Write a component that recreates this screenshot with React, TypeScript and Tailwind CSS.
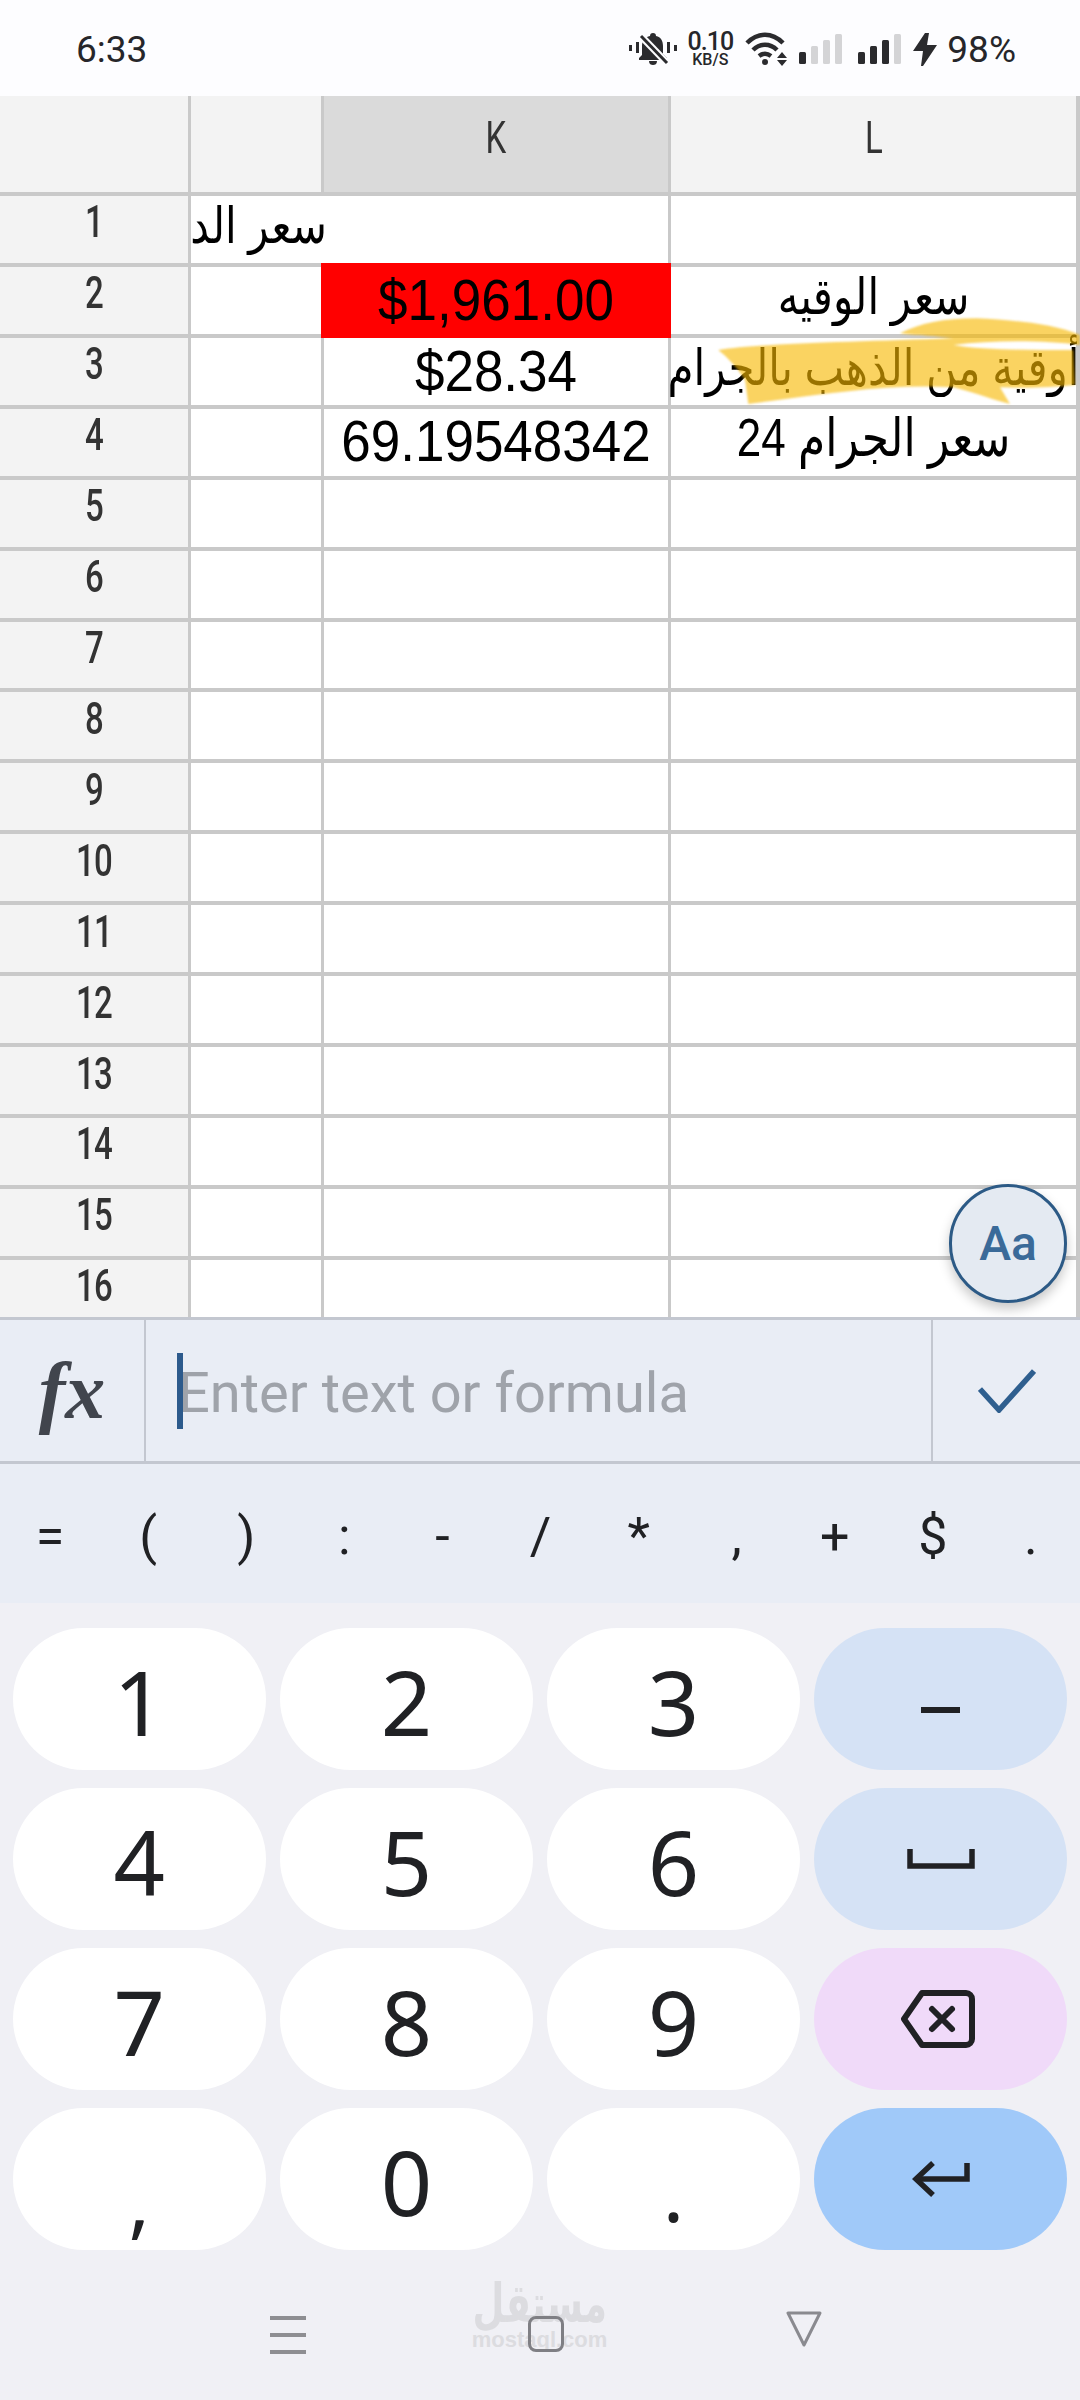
const rowNums = [1, 2, 3, 4, 5, 6, 7, 8, 9, 10, 11, 12, 13, 14, 15, 16];
const symbols = ["=", "(", ")", ":", "-", "/", "*", ",", "+", "$", "."];
const digits = ["1", "2", "3", "4", "5", "6", "7", "8", "9"];

const cells: Record<number, { k?: string; l?: string }> = {
  2: { k: "$1,961.00", l: "سعر الوقيه" },
  3: { k: "$28.34", l: "أوقية من الذهب بالجرام" },
  4: { k: "69.19548342", l: "سعر الجرام 24" },
};

const sans = "font-['Liberation_Sans','DejaVu_Sans',sans-serif]";

function Signal({ bars }: { bars: number }) {
  return (
    <svg width="43" height="30" viewBox="0 0 43 30">
      {[0, 1, 2, 3].map((i) => (
        <rect
          key={i}
          x={i * 12}
          y={18 - i * 6}
          width="7"
          height={12 + i * 6}
          rx="1.5"
          fill={i < bars ? "#2b2b2e" : "#d4d4d6"}
        />
      ))}
    </svg>
  );
}

function StatusBar() {
  return (
    <div className="h-[96px] bg-[#fdfdff] flex items-center pl-[76px] pr-[64px] pt-[2px] justify-between font-['Roboto',sans-serif] text-[#26262a]">
      <span className="text-[37px] leading-none">6:33</span>
      <div className="flex items-center">
        <svg width="48" height="34" viewBox="0 0 48 34" fill="#2b2b2e">
          <rect x="0" y="13" width="3" height="6" />
          <rect x="45" y="13" width="3" height="6" />
          <rect x="7" y="10" width="3" height="11" />
          <rect x="38" y="10" width="3" height="11" />
          <path d="M24 1c2 0 3 1 3 3 5 1 7 5 7 10v8l4 4v2H10v-2l3-3v-9c0-5 3-9 8-10 0-2 1-3 3-3zM20 29h8c0 3-2 4-4 4s-4-1-4-4z" />
          <path d="M11 3l27 28" stroke="#fdfdff" strokeWidth="7" />
          <path d="M12 4l26 27" stroke="#2b2b2e" strokeWidth="3" />
        </svg>
        <div className="ml-[11px] w-[44px] flex flex-col items-center font-medium">
          <span className="text-[25px] leading-[21px] tracking-[-1px]">0.10</span>
          <span className="text-[16px] leading-[16px]">KB/S</span>
        </div>
        <svg className="ml-[13px]" width="44" height="34" viewBox="0 0 44 34" fill="none" stroke="#2b2b2e" strokeWidth="4.5">
          <path d="M2 11c11-11 25-11 36 0" />
          <path d="M8 18c7-7 17-7 24 0" />
          <path d="M14 24c4-3 8-3 12 0" />
          <circle cx="20" cy="30" r="3" fill="#2b2b2e" stroke="none" />
          <path d="M37 20l-5 6h10zM37 34l-5-6h10z" fill="#2b2b2e" stroke="none" />
        </svg>
        <div className="ml-[10px]"><Signal bars={1} /></div>
        <div className="ml-[16px]"><Signal bars={3} /></div>
        <svg className="ml-[12px]" width="24" height="33" viewBox="0 0 24 33" fill="#2b2b2e">
          <path d="M12 0h4l-2 12h10L10 33H8l2-15H0z" />
        </svg>
        <span className="ml-[10px] text-[37px] leading-none">98%</span>
      </div>
    </div>
  );
}

function Sheet() {
  return (
    <div className="relative h-[1221px] bg-white overflow-hidden">
      <div className="flex h-[100px] bg-[#f3f3f3] border-b-4 border-[#c9c9c9] text-[#333] font-['Roboto',sans-serif] text-[44px]">
        <div className="w-[191px] border-r-[3px] border-[#c9c9c9] shrink-0" />
        <div className="w-[130px] shrink-0" />
        <div className="w-[350px] shrink-0 bg-[#dadada] border-x-[3px] border-[#c9c9c9] flex items-center justify-center pb-[12px]">
          <span className="inline-block scale-x-75">K</span>
        </div>
        <div className="flex-1 flex items-center justify-center border-r-[4px] border-[#c9c9c9] pb-[12px]">
          <span className="inline-block scale-x-75">L</span>
        </div>
      </div>
      {rowNums.map((n) => (
        <div key={n} className="flex h-[70.93px] border-b-4 border-[#c9c9c9] last:border-b-0">
          <div className="w-[191px] shrink-0 bg-[#f3f3f3] border-r-[3px] border-[#c9c9c9] flex items-center justify-center pb-[14px] font-['Roboto',sans-serif] font-medium text-[44px] text-[#333] tracking-[-1px]">
            <span className="inline-block scale-x-75">{n}</span>
          </div>
          <div className="w-[130px] shrink-0 relative">
            {n === 1 && (
              <span className={`absolute right-[-6px] top-[-2px] whitespace-nowrap text-[42px] text-black scale-y-[1.2] ${sans}`} dir="rtl">
                سعر الد
              </span>
            )}
          </div>
          <div
            className={`relative w-[350px] shrink-0 border-x-[3px] border-[#c9c9c9] flex items-center justify-center text-[53px] text-black ${sans} ${
              n === 2 ? "bg-[#ff0000] border-[#ff0000] -my-[4px]" : ""
            } ${n === 1 ? "border-l-transparent" : ""}`}
          >
            {cells[n]?.k && <span className="inline-block scale-y-[1.08]">{cells[n].k}</span>}
          </div>
          <div className={`flex-1 min-w-0 border-r-[4px] border-[#c9c9c9] flex items-center justify-center whitespace-nowrap text-black pb-[8px] ${n === 4 ? "text-[44px]" : "text-[42px]"} ${sans}`} dir="rtl">
            {cells[n]?.l && <span className="inline-block scale-y-[1.2]">{cells[n].l}</span>}
          </div>
        </div>
      ))}
      {/* marker highlight over L3, drawn in zoomed coords */}
      <svg className="absolute left-[660px] top-[204px] blur-[1px]" width="420" height="120" viewBox="0 0 1260 360">
        <path
          d="M175 150C300 130 600 125 880 115 800 105 740 105 720 100 780 70 850 55 950 55 1050 60 1180 70 1260 105L1260 135C1150 120 1000 120 880 135 960 150 1100 150 1240 150L1245 255C1180 262 1100 265 1020 262L1050 312C1000 300 950 280 880 262 700 250 500 280 265 312L255 240C230 200 200 170 175 150Z"
          fill="#f7b800"
          fillOpacity="0.62"
        />
      </svg>
      {/* Aa button */}
      <div className="absolute left-[949px] top-[1088px] w-[118px] h-[119px] rounded-full bg-[#e4eaf2] border-[3px] border-[#2c5a86] shadow-[0_6px_12px_rgba(0,0,0,0.22)] flex items-center justify-center font-['Roboto',sans-serif] font-medium text-[48px] text-[#3a6a99]">
        Aa
      </div>
    </div>
  );
}

function FormulaBar() {
  return (
    <div className="flex h-[147px] bg-[#e9edf5] border-y-[3px] border-[#c3c7d0]">
      <div className="w-[146px] shrink-0 border-r-2 border-[#c3c7d0] flex items-center justify-center font-['Liberation_Serif',serif] italic font-bold text-[80px] text-[#41454d]">
        fx
      </div>
      <div className="flex-1 flex items-center pl-[31px] relative">
        <div className="w-[6px] h-[76px] bg-[#2c5a8c] -mr-[5px] shrink-0 z-10" />
        <span className="font-['Roboto',sans-serif] text-[56px] text-[#9fa3aa] leading-none mt-[4px]">Enter text or formula</span>
      </div>
      <div className="w-[149px] shrink-0 border-l-2 border-[#c3c7d0] flex items-center justify-center">
        <svg width="58" height="44" viewBox="0 0 58 44" fill="none" stroke="#2f5f8f" strokeWidth="5.5">
          <path d="M2 20l19 21L56 2" />
        </svg>
      </div>
    </div>
  );
}

function Key({ label, className = "" }: { label: React.ReactNode; className?: string }) {
  return (
    <div className={`h-[142px] rounded-full flex items-center justify-center text-[#202124] ${className}`}>{label}</div>
  );
}

function Keyboard() {
  const digit = (d: string) => <span className="mt-[4px]">{d}</span>;
  return (
    <div className="bg-[#f0f0f5] h-[797px]">
      <div className="grid grid-cols-4 gap-x-[14.67px] gap-y-[18px] pl-[13px] pr-[13px] pt-[25px] font-['Noto_Sans',sans-serif] text-[90px]">
        {digits.slice(0, 3).map((d) => <Key key={d} label={digit(d)} className="bg-white" />)}
        <Key className="bg-[#d5e2f5]" label={<div className="w-[39px] h-[6px] bg-[#202124] mt-[22px]" />} />
        {digits.slice(3, 6).map((d) => <Key key={d} label={digit(d)} className="bg-white" />)}
        <Key
          className="bg-[#d5e2f5]"
          label={
            <svg width="68" height="20" viewBox="0 0 68 20" fill="none" stroke="#202124" strokeWidth="5.5">
              <path d="M3 0v17h62V0" />
            </svg>
          }
        />
        {digits.slice(6, 9).map((d) => <Key key={d} label={digit(d)} className="bg-white" />)}
        <Key
          className="bg-[#f0daf9]"
          label={
            <svg className="-ml-[5px]" width="76" height="60" viewBox="0 0 76 60" fill="none" stroke="#202124" strokeWidth="6" strokeLinejoin="round" strokeLinecap="round">
              <path d="M4 30L22 4h44a6 6 0 0 1 6 6v40a6 6 0 0 1-6 6H22z" />
              <path d="M32 20l20 20M52 20L32 40" />
            </svg>
          }
        />
        <Key className="bg-white" label={<span className="text-[80px] mt-[40px]">,</span>} />
        <Key className="bg-white" label={digit("0")} />
        <Key className="bg-white" label={<span className="text-[80px] mt-[24px]">.</span>} />
        <Key
          className="bg-[#a0c9f9]"
          label={
            <svg width="58" height="36" viewBox="0 0 58 36" fill="none" stroke="#202124" strokeWidth="5.5">
              <path d="M55 2v16H5" />
              <path d="M21 2L4 18l17 16" />
            </svg>
          }
        />
      </div>
      <div className="relative mt-[42px] h-[100px]">
        <div className="absolute left-[474px] w-[131px] top-0 flex flex-col items-center text-[#dcdce0] font-['Liberation_Sans','DejaVu_Sans',sans-serif]">
          <span className="text-[54px] leading-[38px] font-bold scale-x-[0.68] -mt-[8px]" dir="rtl">مستقل</span>
          <span className="text-[22px] leading-[20px] font-bold mt-[8px]">mostaql.com</span>
        </div>
        <div className="relative flex justify-center h-full pl-[11px]">
          <div className="w-[36px] h-[38px] mt-[24px] mr-[222px] flex flex-col justify-between">
            <div className="h-[4px] bg-[#8e8e92]" />
            <div className="h-[4px] bg-[#8e8e92]" />
            <div className="h-[4px] bg-[#8e8e92]" />
          </div>
          <div className="w-[36px] h-[36px] mt-[24px] rounded-[8px] border-[3px] border-[#7f7f84]" />
          <svg className="ml-[222px] mt-[19px]" width="36" height="36" viewBox="0 0 36 36" fill="none" stroke="#8a8a8f" strokeWidth="3" strokeLinejoin="round">
            <path d="M2 2h32L18 34z" />
          </svg>
        </div>
      </div>
    </div>
  );
}

export default function App() {
  return (
    <div className="w-[1080px] h-[2400px] overflow-hidden bg-white">
      <StatusBar />
      <Sheet />
      <FormulaBar />
      <div className="h-[139px] bg-[#e9edf5] grid grid-cols-11 items-center pl-px pt-[6px] font-['Roboto',sans-serif] text-[52px] text-[#202124]">
        {symbols.map((s) => (
          <div key={s} className="text-center">{s}</div>
        ))}
      </div>
      <Keyboard />
    </div>
  );
}
